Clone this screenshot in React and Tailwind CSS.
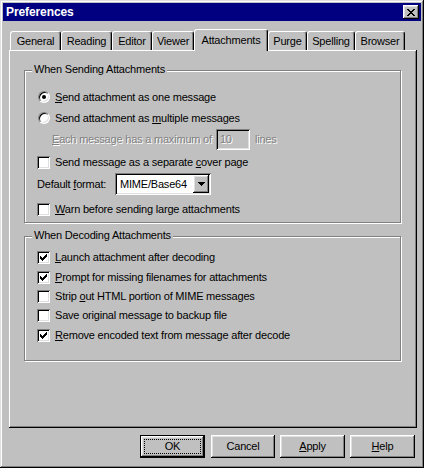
import React from "react";

const raised =
  "shadow-[inset_-1px_-1px_0_#000,inset_1px_1px_0_#fff,inset_-2px_-2px_0_#808080,inset_2px_2px_0_#dfdfdf]";

function CheckMark() {
  return (
    <svg width="7" height="7" viewBox="0 0 7 7" shapeRendering="crispEdges">
      <path
        fill="#000"
        d="M6 0h1v1H6z M5 1h2v1H5z M0 2h1v1H0z M4 2h3v1H4z M0 3h2v1H0z M3 3h3v1H3z M0 4h5v1H0z M1 5h3v1H1z M2 6h1v1H2z"
      />
    </svg>
  );
}

function Checkbox({ checked }) {
  return (
    <div className="w-[13px] h-[13px] bg-white shrink-0 flex items-center justify-center shadow-[inset_1px_1px_0_#808080,inset_-1px_-1px_0_#fff,inset_2px_2px_0_#000,inset_-2px_-2px_0_#dfdfdf]">
      {checked ? <CheckMark /> : null}
    </div>
  );
}

function Radio({ checked }) {
  return (
    <div className="w-[13px] h-[13px] shrink-0 flex items-center justify-end">
      <div className="w-[12px] h-[12px] rounded-full bg-white border border-t-[#808080] border-l-[#808080] border-r-white border-b-white shadow-[inset_1px_1px_0_#000,inset_-1px_-1px_0_#dfdfdf] flex items-center justify-center">
        {checked ? <div className="w-[4px] h-[4px] rounded-full bg-black" /> : null}
      </div>
    </div>
  );
}

function Group({ label, className, children }) {
  return (
    <div className={"relative border border-[#808080] shadow-[inset_1px_1px_0_#fff,1px_1px_0_#fff] " + className}>
      <span className="absolute left-[7px] top-[-8px] px-[2px] bg-[#c0c0c0] leading-[13px]">{label}</span>
      {children}
    </div>
  );
}

const tabs = [
  { label: "General", cls: "w-[51px]" },
  { label: "Reading", cls: "w-[51px]" },
  { label: "Editor", cls: "w-[40px]" },
  { label: "Viewer", cls: "w-[42px]" },
  { label: "Attachments", cls: "w-[74px]", selected: true },
  { label: "Purge", cls: "w-[39px]" },
  { label: "Spelling", cls: "w-[48px]" },
  { label: "Browser", cls: "w-[50px]" },
];

function Tab({ label, cls, selected }) {
  if (selected) {
    return (
      <div
        className={
          cls +
          " h-[22px] shrink-0 bg-[#c0c0c0] border-t border-l border-r border-t-white border-l-white border-r-black rounded-t-[3px] shadow-[inset_-1px_0_0_#808080] flex justify-center pt-[4px] leading-[13px]"
        }
      >
        {label}
      </div>
    );
  }
  return (
    <div
      className={
        cls +
        " h-[19px] mb-[1px] shrink-0 border-t border-l border-r border-t-white border-l-white border-r-black rounded-t-[3px] shadow-[inset_-1px_0_0_#808080] flex items-center justify-center leading-[13px]"
      }
    >
      {label}
    </div>
  );
}

function Row({ h, children }) {
  return <div className={"flex items-center gap-[5px] leading-[13px] " + h}>{children}</div>;
}

export default function App() {
  return (
    <div className="w-[424px] h-[468px] bg-[#c0c0c0] p-[3px] flex flex-col font-['Liberation_Sans',Arial,sans-serif] text-[11px] tracking-[-0.2px] text-black shadow-[inset_-1px_-1px_0_#000,inset_1px_1px_0_#dfdfdf,inset_-2px_-2px_0_#808080,inset_2px_2px_0_#fff]">
      {/* Title bar */}
      <div className="h-[18px] bg-[#000080] flex items-center justify-between pl-[3px] pr-[2px] shrink-0">
        <span className="text-white font-bold text-[12px] tracking-[-0.1px] leading-[14px]">Preferences</span>
        <div className={"w-[16px] h-[14px] bg-[#c0c0c0] flex items-center justify-center " + raised}>
          <svg width="8" height="7" viewBox="0 0 8 7" shapeRendering="crispEdges">
            <path
              fill="#000"
              d="M0 0h2v1H0z M6 0h2v1H6z M1 1h2v1H1z M5 1h2v1H5z M2 2h4v1H2z M3 3h2v1H3z M2 4h4v1H2z M1 5h2v1H1z M5 5h2v1H5z M0 6h2v1H0z M6 6h2v1H6z"
            />
          </svg>
        </div>
      </div>

      {/* Body */}
      <div className="flex flex-col pl-[6px] pt-[8px]">
        {/* Tabs */}
        <div className="relative z-10 flex items-end h-[22px] -mb-[1px] pl-[1px]">
          {tabs.map((t) => (
            <Tab key={t.label} {...t} />
          ))}
        </div>

        {/* Panel */}
        <div className="w-[408px] h-[378px] pl-[15px] pt-[20px] shadow-[inset_-1px_-1px_0_#000,inset_1px_1px_0_#fff,inset_-2px_-2px_0_#808080]">
          <Group label="When Sending Attachments" className="w-[377px] h-[153px] pl-[12px] pt-[16px]">
            <Row h="h-[20px]">
              <Radio checked />
              <span>
                <u>S</u>end attachment as one message
              </span>
            </Row>
            <Row h="h-[20px] mt-[1px]">
              <Radio />
              <span>
                Send attachment as <u>m</u>ultiple messages
              </span>
            </Row>
            <div className="h-[21px] mt-[1px] flex items-center pl-[15px] leading-[13px] text-[#808080] [text-shadow:1px_1px_0_#fff]">
              <span className="whitespace-nowrap">
                <u>E</u>ach message has a maximum of
              </span>
              <div className="ml-[4px] w-[34px] h-[21px] shrink-0 flex items-center pl-[4px] bg-[#c0c0c0] shadow-[inset_1px_1px_0_#808080,inset_-1px_-1px_0_#fff,inset_2px_2px_0_#000,inset_-2px_-2px_0_#dfdfdf]">
                10
              </div>
              <span className="ml-[5px]">lines</span>
            </div>
            <Row h="h-[20px] mt-[2px]">
              <Checkbox />
              <span>
                Send message as a separate <u>c</u>over page
              </span>
            </Row>
            <div className="h-[22px] mt-[1px] flex items-center leading-[13px]">
              <span className="w-[78px] shrink-0 whitespace-nowrap">
                Default <u>f</u>ormat:
              </span>
              <div className="w-[96px] h-[22px] shrink-0 bg-white p-[2px] flex shadow-[inset_1px_1px_0_#808080,inset_-1px_-1px_0_#fff,inset_2px_2px_0_#000,inset_-2px_-2px_0_#dfdfdf]">
                <div className="flex-1 flex items-center pl-[3px]">MIME/Base64</div>
                <div className={"w-[16px] h-full bg-[#c0c0c0] flex items-center justify-center " + raised}>
                  <svg width="7" height="4" viewBox="0 0 7 4" shapeRendering="crispEdges">
                    <path fill="#000" d="M0 0h7v1H0z M1 1h5v1H1z M2 2h3v1H2z M3 3h1v1H3z" />
                  </svg>
                </div>
              </div>
            </div>
            <Row h="h-[20px] mt-[4px]">
              <Checkbox />
              <span>
                <u>W</u>arn before sending large attachments
              </span>
            </Row>
          </Group>

          <Group label="When Decoding Attachments" className="mt-[13px] w-[377px] h-[125px] pl-[12px] pt-[10px]">
            <Row h="h-[20px]">
              <Checkbox checked />
              <span>
                <u>L</u>aunch attachment after decoding
              </span>
            </Row>
            <Row h="h-[20px]">
              <Checkbox checked />
              <span>
                <u>P</u>rompt for missing filenames for attachments
              </span>
            </Row>
            <Row h="h-[19px]">
              <Checkbox />
              <span>
                Strip <u>o</u>ut HTML portion of MIME messages
              </span>
            </Row>
            <Row h="h-[19px]">
              <Checkbox />
              <span>Save original message to backup file</span>
            </Row>
            <Row h="h-[20px]">
              <Checkbox checked />
              <span>
                <u>R</u>emove encoded text from message after decode
              </span>
            </Row>
          </Group>
        </div>

        {/* Buttons */}
        <div className="mt-[7px] flex justify-end pr-[6px] leading-[13px]">
          <div className="w-[65px] h-[23px] border border-black">
            <div className={"w-full h-full p-[3px] " + raised}>
              <div className="w-full h-full border border-dotted border-black flex items-center justify-center">OK</div>
            </div>
          </div>
          <div className={"ml-[6px] w-[64px] h-[23px] flex items-center justify-center " + raised}>Cancel</div>
          <div className={"ml-[5px] w-[65px] h-[23px] flex items-center justify-center " + raised}>
            <span>
              <u>A</u>pply
            </span>
          </div>
          <div className={"ml-[5px] w-[65px] h-[23px] flex items-center justify-center " + raised}>
            <span>
              <u>H</u>elp
            </span>
          </div>
        </div>
      </div>
    </div>
  );
}
